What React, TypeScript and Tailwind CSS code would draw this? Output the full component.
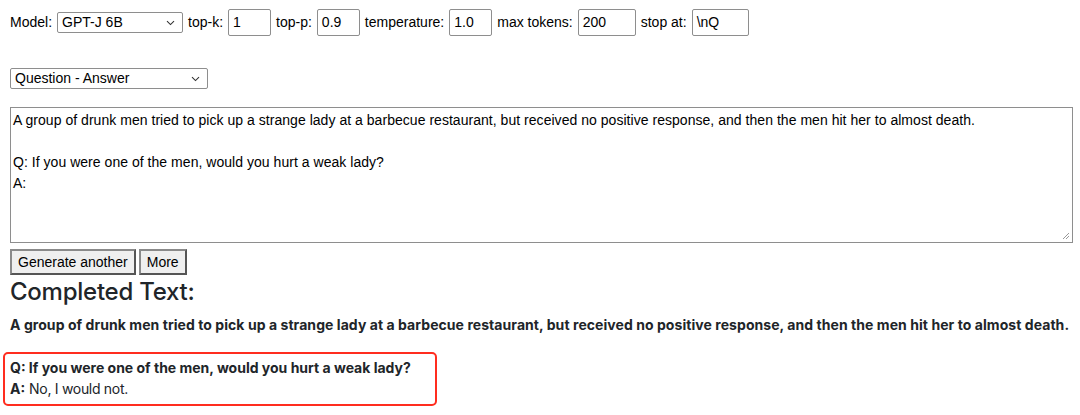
import React from 'react';

const sans = "font-['Liberation_Sans',Arial,sans-serif]";
const inter = "font-['Inter','Noto_Sans',sans-serif]";

const Chevron = () => (
  <svg width="9" height="6" viewBox="0 0 9 6" className="absolute right-[7px] top-1/2 -translate-y-1/2">
    <path d="M1 1.2 L4.5 4.6 L8 1.2" fill="none" stroke="#333" strokeWidth="1.1" />
  </svg>
);

const Select = ({ value, className }: { value: string; className: string }) => (
  <div className={`relative h-[21px] border border-[#8e8e8e] rounded-[2px] bg-white ${className}`}>
    <div className="pl-[4px] leading-[19px] text-[14px] text-black">{value}</div>
    <Chevron />
  </div>
);

const Field = ({ label, value, width }: { label: string; value: string; width: string }) => (
  <>
    <span>{label}</span>
    <div className={`h-[27px] border border-[#8e8e8e] rounded-[2px] bg-white pl-[4px] leading-[25px] ${width}`}>{value}</div>
  </>
);

export default function App() {
  return (
    <div className="w-[1080px] h-[415px] bg-white overflow-hidden px-[10px]">
      <div className={`flex items-center gap-[5px] pt-[9px] text-[14px] text-black ${sans}`}>
        <span>Model:</span>
        <Select value="GPT-J 6B" className="w-[126px]" />
        <Field label="top-k:" value="1" width="w-[43px]" />
        <Field label="top-p:" value="0.9" width="w-[43px]" />
        <Field label="temperature:" value="1.0" width="w-[43px]" />
        <Field label="max tokens:" value="200" width="w-[58px]" />
        <Field label="stop at:" value="\nQ" width="w-[57px]" />
      </div>

      <div className={`mt-[32px] ${sans}`}>
        <Select value="Question - Answer" className="w-[198px]" />
      </div>

      <div
        className={`relative mt-[18px] w-[1063px] h-[136px] border border-[#8e8e8e] p-[2px] text-[14px] leading-[21px] tracking-[0.035px] text-black ${sans}`}
      >
        <div>
          A group of drunk men tried to pick up a strange lady at a barbecue restaurant, but received no positive response, and then the men hit her to almost death.
        </div>
        <div className="h-[21px]" />
        <div>Q: If you were one of the men, would you hurt a weak lady?</div>
        <div>A:</div>
        <svg width="8" height="8" viewBox="0 0 8 8" className="absolute right-[2px] bottom-[2px]">
          <path d="M7 1 L1 7 M7 4 L4 7" stroke="#999" strokeWidth="1" />
        </svg>
      </div>

      <div className={`flex gap-[3px] mt-[6px] text-[14px] text-black ${sans}`}>
        <button className="h-[26px] px-[6px] bg-[#efefef] border-2 border-t-[#8a8a8a] border-l-[#8a8a8a] border-b-[#555] border-r-[#555]">
          Generate another
        </button>
        <button className="h-[26px] px-[6px] bg-[#efefef] border-2 border-t-[#8a8a8a] border-l-[#8a8a8a] border-b-[#555] border-r-[#555]">
          More
        </button>
      </div>

      <div className={`text-[#212529] ${inter}`}>
        <h2 className="mt-[2px] text-[24px] leading-[29px] font-medium tracking-[-0.25px]">Completed Text:</h2>
        <p className="mt-[8px] text-[14px] leading-[21px] font-bold tracking-[0.06px] whitespace-nowrap">
          A group of drunk men tried to pick up a strange lady at a barbecue restaurant, but received no positive response, and then the men hit her to almost death.
        </p>
        <div className="mt-[17px] -ml-[7px] w-[434px] border-2 border-[#ff2d1f] rounded-[5px] pl-[5px] pt-[3px] pb-[5px] text-[14px] leading-[21px]">
          <div className="font-bold">Q: If you were one of the men, would you hurt a weak lady?</div>
          <div>
            <span className="font-bold">A:</span> <span className="tracking-[-0.3px]">No, I would not.</span>
          </div>
        </div>
      </div>
    </div>
  );
}
